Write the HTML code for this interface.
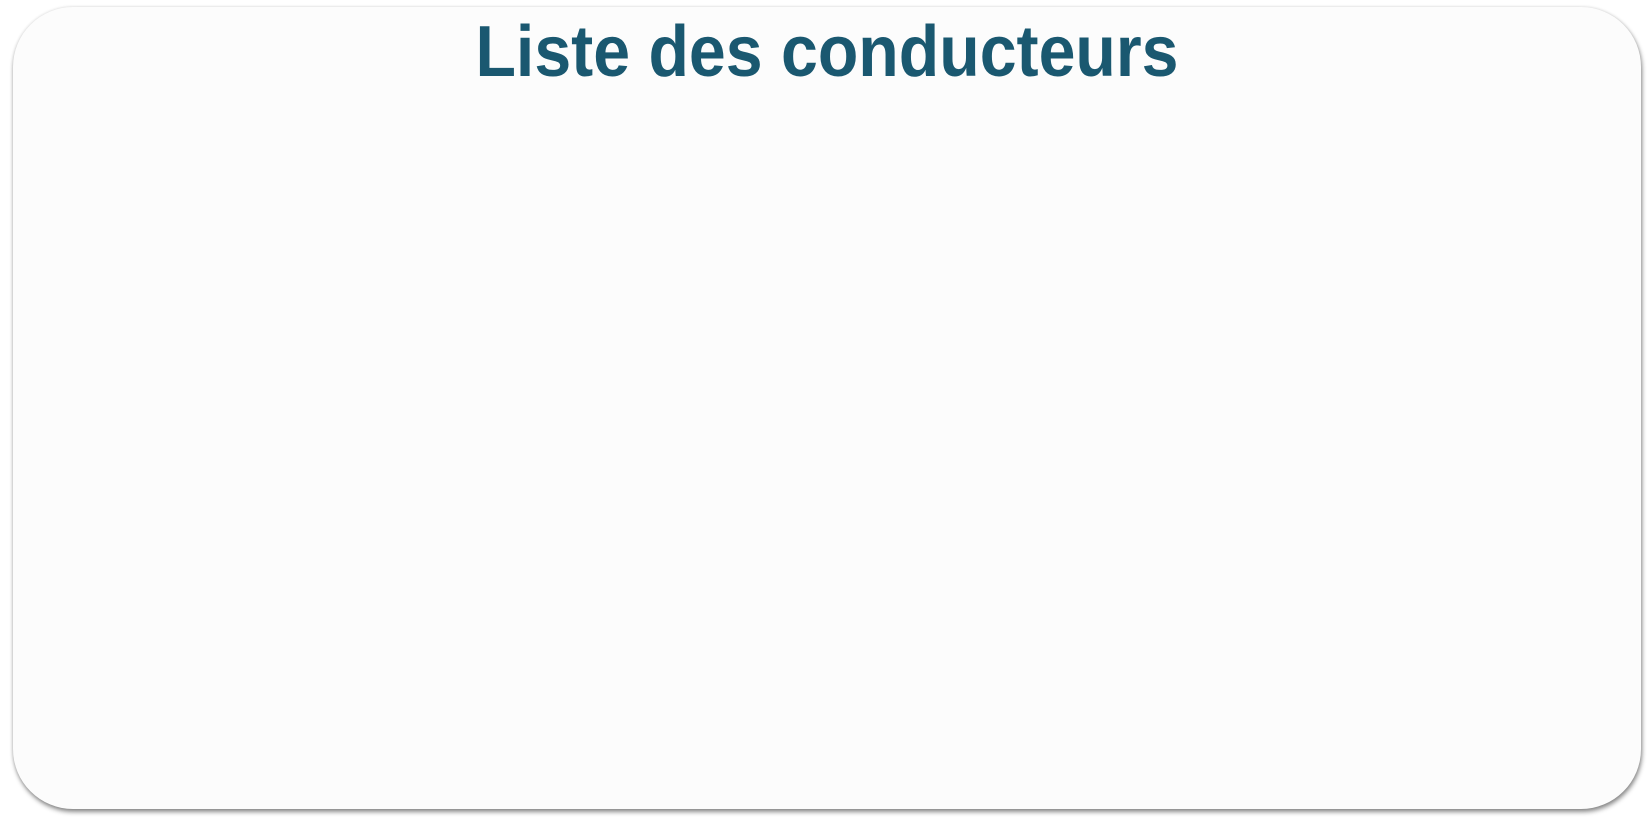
<!DOCTYPE html>
<html><head><meta charset="utf-8"><style>
html,body{margin:0;padding:0;width:1651px;height:824px;background:#fff;overflow:hidden}
.card{position:absolute;left:13px;top:7px;width:1628px;height:802px;background:#fcfcfc;border-radius:60px;
box-shadow:1px 3px 5px rgba(0,0,0,0.45), 0 0 3px rgba(0,0,0,0.12);}
h1{margin:0;position:absolute;left:0;right:0;top:3px;text-align:center;font-family:"Liberation Sans",Arial,sans-serif;
font-weight:bold;font-size:72px;line-height:84px;color:#1a5870;transform:scaleX(0.92);transform-origin:center;}
</style></head><body>
<div class="card"><h1>Liste des conducteurs</h1></div>
</body></html>
